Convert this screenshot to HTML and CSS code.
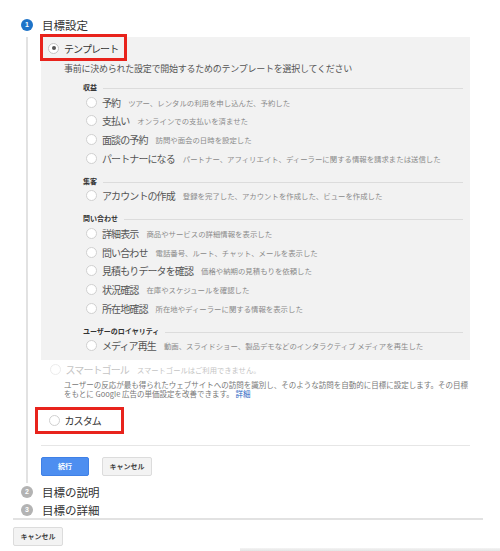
FILE: index.html
```html
<!DOCTYPE html>
<html lang="ja">
<head>
<meta charset="utf-8">
<link rel="stylesheet" href="styles.css">
</head>
<body>
<div class="wizard">
  <div class="step">
    <div class="step-head"><span class="num num-active">1</span><span class="step-title">目標設定</span></div>
    <div class="step-body">
      <div class="panel">
        <div class="opt-row tmpl-row">
          <span class="radio radio-on"></span><span class="opt-label">テンプレート</span>
          <span class="annot annot-tmpl"></span>
        </div>
        <div class="panel-desc">事前に決められた設定で開始するためのテンプレートを選択してください</div>

        <div class="group">
          <div class="group-head"><span>収益</span><i></i></div>
          <div class="row"><span class="radio"></span><span class="lbl">予約</span><span class="sub">ツアー、レンタルの利用を申し込んだ、予約した</span></div>
          <div class="row"><span class="radio"></span><span class="lbl">支払い</span><span class="sub">オンラインでの支払いを済ませた</span></div>
          <div class="row"><span class="radio"></span><span class="lbl">面談の予約</span><span class="sub">訪問や面会の日時を設定した</span></div>
          <div class="row"><span class="radio"></span><span class="lbl">パートナーになる</span><span class="sub">パートナー、アフィリエイト、ディーラーに関する情報を請求または送信した</span></div>
        </div>

        <div class="group">
          <div class="group-head"><span>集客</span><i></i></div>
          <div class="row"><span class="radio"></span><span class="lbl">アカウントの作成</span><span class="sub">登録を完了した、アカウントを作成した、ビューを作成した</span></div>
        </div>

        <div class="group">
          <div class="group-head"><span>問い合わせ</span><i></i></div>
          <div class="row"><span class="radio"></span><span class="lbl">詳細表示</span><span class="sub">商品やサービスの詳細情報を表示した</span></div>
          <div class="row"><span class="radio"></span><span class="lbl">問い合わせ</span><span class="sub">電話番号、ルート、チャット、メールを表示した</span></div>
          <div class="row"><span class="radio"></span><span class="lbl">見積もりデータを確認</span><span class="sub">価格や納期の見積もりを依頼した</span></div>
          <div class="row"><span class="radio"></span><span class="lbl">状況確認</span><span class="sub">在庫やスケジュールを確認した</span></div>
          <div class="row"><span class="radio"></span><span class="lbl">所在地確認</span><span class="sub">所在地やディーラーに関する情報を表示した</span></div>
        </div>

        <div class="group">
          <div class="group-head"><span>ユーザーのロイヤリティ</span><i></i></div>
          <div class="row"><span class="radio"></span><span class="lbl">メディア再生</span><span class="sub">動画、スライドショー、製品デモなどのインタラクティブ メディアを再生した</span></div>
        </div>
      </div>

      <div class="opt-row smart-row">
        <span class="radio radio-off"></span><span class="opt-label muted">スマートゴール</span><span class="smart-note">スマートゴールはご利用できません。</span>
      </div>
      <div class="smart-desc">ユーザーの反応が最も得られたウェブサイトへの訪問を識別し、そのような訪問を自動的に目標に設定します。その目標<br>をもとに Google 広告の単価設定を改善できます。 <a class="link">詳細</a></div>

      <div class="opt-row custom-row">
        <span class="radio"></span><span class="opt-label">カスタム</span>
        <span class="annot annot-custom"></span>
      </div>

      <div class="sep"></div>

      <div class="actions">
        <button class="btn btn-primary">続行</button>
        <button class="btn">キャンセル</button>
      </div>
    </div>
  </div>

  <div class="step-head step-head-2"><span class="num">2</span><span class="step-title">目標の説明</span></div>
  <div class="step-head step-head-3"><span class="num">3</span><span class="step-title">目標の詳細</span></div>

  <div class="footer">
    <div class="footer-line"></div>
    <button class="btn">キャンセル</button>
  </div>
  <div class="shadow-bar"></div>
</div>
</body>
</html>
```

FILE: styles.css
```css
html, body {
  margin: 0;
  padding: 0;
  background: #fff;
}
body {
  font-family: "Noto Sans CJK JP", "Noto Sans", sans-serif;
  color: #333;
  width: 500px;
  height: 551px;
  overflow: hidden;
}
.wizard {
  padding-top: 16px;
  position: relative;
  height: 535px;
}
.step-head {
  display: flex;
  align-items: center;
  height: 18px;
  padding-left: 21px;
}
.step-head-3 {
  height: 17px;
}
.num {
  width: 12px;
  height: 12px;
  border-radius: 50%;
  background: #b3b3b3;
  color: #fff;
  font-size: 7px;
  font-weight: bold;
  line-height: 12px;
  text-align: center;
  flex: none;
  font-family: "Liberation Sans", sans-serif;
}
.num-active {
  background: #1e73c8;
}
.step-title {
  margin-left: 9px;
  font-size: 11.5px;
  line-height: 18px;
  color: #333;
}
.step-body {
  margin-left: 26px;
  border-left: 2px solid #e2e2e2;
  padding-left: 13px;
  padding-bottom: 7px;
}
.panel {
  margin-top: 3px;
  width: 429px;
  background: #f2f2f2;
  padding-bottom: 4.3px;
}
.opt-row {
  display: flex;
  align-items: center;
  position: relative;
}
.tmpl-row {
  height: 22px;
  padding-left: 7px;
}
.radio {
  width: 9px;
  height: 9px;
  border-radius: 50%;
  border: 1px solid #d0d0d0;
  background: #fff;
  flex: none;
  position: relative;
}
.radio-on {
  border-color: #c4c4c4;
}
.radio-on::after {
  content: "";
  position: absolute;
  left: 2.5px;
  top: 2.5px;
  width: 4px;
  height: 4px;
  border-radius: 50%;
  background: #555;
}
.radio-off {
  border-color: #ececec;
}
.opt-label {
  margin-left: 5px;
  font-size: 10px;
  letter-spacing: -0.9px;
  color: #333;
}
.opt-label.muted {
  color: #c4c4c4;
}
.annot {
  position: absolute;
  border: 3px solid #e8231c;
  box-sizing: border-box;
  pointer-events: none;
}
.annot-tmpl {
  left: -1px;
  top: -3px;
  width: 87px;
  height: 27px;
}
.annot-custom {
  left: -6px;
  top: -4px;
  width: 89px;
  height: 27px;
}
.panel-desc {
  margin-top: 3px;
  padding-left: 23px;
  font-size: 9px;
  letter-spacing: -0.25px;
  line-height: 14px;
  color: #555;
}
.group {
  margin: 7px 7px 0 42px;
}
.panel-desc + .group {
  margin-top: 5px;
}
.group-head {
  display: flex;
  align-items: center;
  height: 12px;
  font-size: 7px;
  font-weight: bold;
  color: #333;
}
.group-head i {
  flex: 1;
  height: 1px;
  background: #dcdcdc;
  margin-left: 6px;
  margin-top: 3px;
}
.row {
  display: flex;
  align-items: center;
  height: 18.67px;
  padding-left: 2.5px;
  white-space: nowrap;
}
.lbl {
  margin-left: 5.5px;
  font-size: 10px;
  letter-spacing: -0.9px;
  color: #555;
}
.sub {
  margin-left: 8px;
  font-size: 7.4px;
  color: #8a8a8a;
}
.smart-row {
  margin-top: 2px;
  height: 16px;
  padding-left: 8.5px;
}
.smart-note {
  margin-left: 8px;
  font-size: 7.3px;
  color: #c4c4c4;
}
.smart-desc {
  margin-top: 2px;
  padding-left: 23px;
  font-size: 7.5px;
  line-height: 9.5px;
  color: #777;
  white-space: nowrap;
}
.link {
  color: #2a66c3;
}
.custom-row {
  margin-top: 12px;
  height: 20px;
  padding-left: 7.5px;
}
.sep {
  margin-top: 14px;
  width: 429px;
  height: 1.5px;
  background: #e6e6e6;
}
.actions {
  margin-top: 11px;
  display: flex;
  gap: 13px;
}
.btn {
  height: 19px;
  padding: 0;
  width: 50px;
  font-family: "Noto Sans CJK JP", sans-serif;
  font-size: 7px;
  font-weight: bold;
  color: #444;
  background: #f3f3f3;
  border: 1px solid #dcdcdc;
  border-radius: 2px;
  line-height: 17px;
}
.btn-primary {
  width: 48px;
  background: #4d8ef0;
  border-color: #3f80e6;
  color: #fff;
}
.footer {
  padding: 0 17px 0 13px;
}
.footer-line {
  height: 2px;
  background: #e2e2e2;
  margin-top: 0;
  margin-bottom: 7px;
}
.footer .btn {
  display: block;
  width: 50px;
}
.shadow-bar {
  position: absolute;
  left: 240px;
  right: 0;
  top: 548px;
  height: 3px;
  background: linear-gradient(#f4f4f4, #e4e4e4);
}
```
